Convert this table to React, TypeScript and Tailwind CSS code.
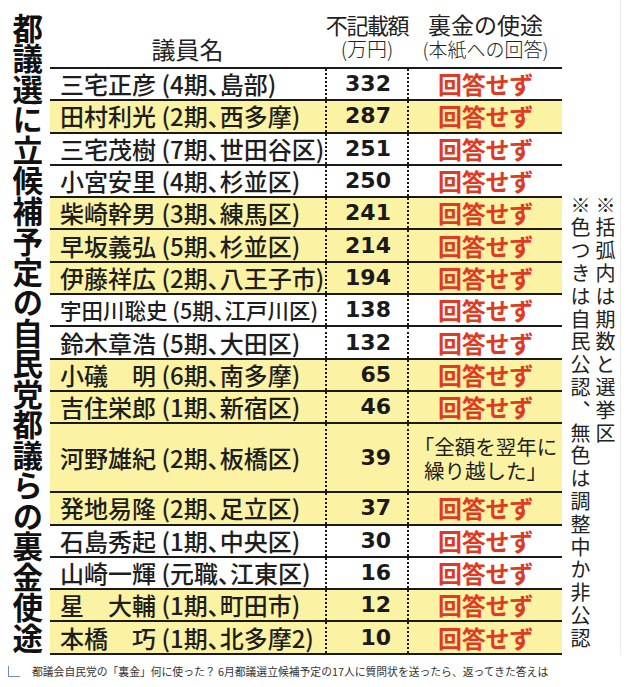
import React from "react";

type Row = { name: string; detail: string; amt: string; yellow: boolean; small?: boolean; special?: boolean };

const rows: Row[] = [
  { name: "三宅正彦", detail: "(4期、島部)", amt: "332", yellow: false },
  { name: "田村利光", detail: "(2期、西多摩)", amt: "287", yellow: true },
  { name: "三宅茂樹", detail: "(7期、世田谷区)", amt: "251", yellow: false },
  { name: "小宮安里", detail: "(4期、杉並区)", amt: "250", yellow: false },
  { name: "柴崎幹男", detail: "(3期、練馬区)", amt: "241", yellow: true },
  { name: "早坂義弘", detail: "(5期、杉並区)", amt: "214", yellow: true },
  { name: "伊藤祥広", detail: "(2期、八王子市)", amt: "194", yellow: true },
  { name: "宇田川聡史", detail: "(5期、江戸川区)", amt: "138", yellow: false, small: true },
  { name: "鈴木章浩", detail: "(5期、大田区)", amt: "132", yellow: false },
  { name: "小礒　明", detail: "(6期、南多摩)", amt: "65", yellow: true },
  { name: "吉住栄郎", detail: "(1期、新宿区)", amt: "46", yellow: true },
  { name: "河野雄紀", detail: "(2期、板橋区)", amt: "39", yellow: true, special: true },
  { name: "発地易隆", detail: "(2期、足立区)", amt: "37", yellow: true },
  { name: "石島秀起", detail: "(1期、中央区)", amt: "30", yellow: false },
  { name: "山崎一輝", detail: "(元職、江東区)", amt: "16", yellow: false },
  { name: "星　大輔", detail: "(1期、町田市)", amt: "12", yellow: true },
  { name: "本橋　巧", detail: "(1期、北多摩2)", amt: "10", yellow: true },
];

function TableRow({ r }: { r: Row }) {
  return (
    <div
      className={
        (r.special ? "h-[69px] " : "h-[32.3px] ") +
        (r.yellow ? "bg-[#fbf3a3] " : "bg-white ") +
        "flex border-b-2 border-[#1a1a1a]"
      }
    >
      <div
        className={
          (r.small ? "text-[21.5px] " : "text-[24px] ") +
          "w-[275px] flex items-center pl-[10px] font-medium whitespace-nowrap leading-none text-[#1e1e1e] [font-feature-settings:'palt']"
        }
      >
        {r.name} {r.detail}
      </div>
      <div className="w-[82px] border-l-2 border-dotted border-[#1a1a1a] flex items-center justify-end pr-[16px] [font-family:'DejaVu_Sans',sans-serif] font-bold text-[22px] leading-none text-[#1a1a1a]">
        {r.amt}
      </div>
      <div className="flex-1 border-l-2 border-dotted border-[#1a1a1a] flex items-center justify-center">
        {r.special ? (
          <div className="text-[20.5px] leading-[24px] text-center text-[#1e1e1e] whitespace-nowrap">
            「全額を翌年に
            <br />
            繰り越した」
          </div>
        ) : (
          <span className="text-[24px] font-bold leading-none text-[#e13a22] tracking-[-0.3px]">回答せず</span>
        )}
      </div>
    </div>
  );
}

export default function App() {
  return (
    <div className="w-[627px] h-[687px] bg-white text-[#1a1a1a] [font-family:'Noto_Sans_CJK_JP',sans-serif] flex flex-col">
      <div className="flex h-[655px] w-[621px] border-r border-[#ececec]">
        <div className="w-[50px] flex justify-center pl-[5px] pt-[13px]">
          <h1 className="[writing-mode:vertical-rl] text-[30.5px] leading-none font-bold text-[#111]">
            都議選に立候補予定の自民党都議らの裏金使途
          </h1>
        </div>
        <div className="w-[512px] flex flex-col">
          <div className="h-[69px] flex border-b-2 border-[#1a1a1a]">
            <div className="w-[275px] flex items-end justify-center pb-[6px] text-[24px] leading-[24px] text-[#222]">
              議員名
            </div>
            <div className="w-[84px] flex flex-col items-center justify-end pb-[6px] whitespace-nowrap text-[#222]">
              <div className="text-[22px] leading-[24px] tracking-[-1.4px]">不記載額</div>
              <div className="text-[20px] leading-[24px] font-light mt-[1px]">(万円)</div>
            </div>
            <div className="flex-1 flex flex-col items-center justify-end pb-[6px] whitespace-nowrap text-[#222]">
              <div className="text-[23px] leading-[24px]">裏金の使途</div>
              <div className="text-[19px] leading-[24px] font-light mt-[1px]">(本紙への回答)</div>
            </div>
          </div>
          {rows.map((r) => (
            <TableRow key={r.name} r={r} />
          ))}
        </div>
        <div className="flex-1 flex justify-center pl-[4px] pt-[195px]">
          <div className="[writing-mode:vertical-rl] text-[20px] leading-[25px] tracking-[2.8px] text-[#222]">
            <div>※括弧内は期数と選挙区</div>
            <div>※色つきは自民公認、無色は調整中か非公認</div>
          </div>
        </div>
      </div>
      <div className="flex items-center h-[32px] pl-[8px]">
        <div className="w-[12px] h-[11px] border-l border-b border-[#6b8fbf]" />
        <p className="ml-[12px] text-[10.8px] leading-none text-[#333] whitespace-nowrap">
          都議会自民党の「裏金」何に使った？ 6月都議選立候補予定の17人に質問状を送ったら、返ってきた答えは
        </p>
      </div>
    </div>
  );
}
